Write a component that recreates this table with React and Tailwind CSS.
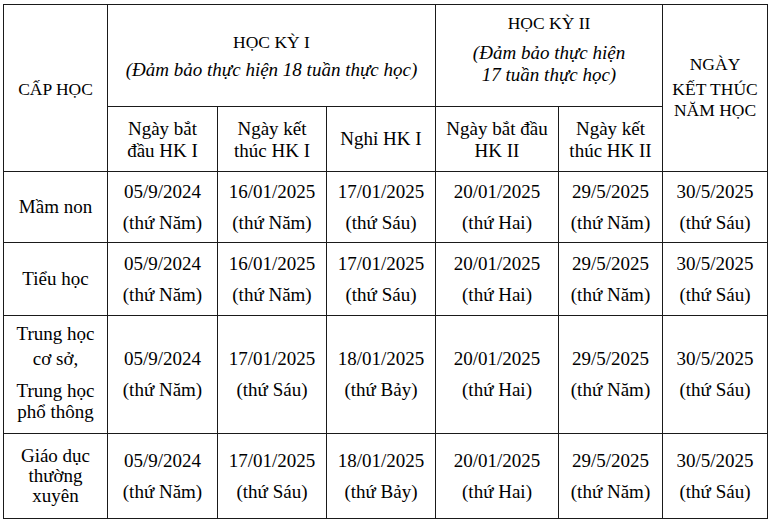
import React from "react";

const rows = [
  {
    name: ["Mầm non"],
    h: "h-[71px]",
    cells: [
      ["05/9/2024", "(thứ Năm)"],
      ["16/01/2025", "(thứ Năm)"],
      ["17/01/2025", "(thứ Sáu)"],
      ["20/01/2025", "(thứ Hai)"],
      ["29/5/2025", "(thứ Năm)"],
      ["30/5/2025", "(thứ Sáu)"],
    ],
  },
  {
    name: ["Tiểu học"],
    h: "h-[73px]",
    cells: [
      ["05/9/2024", "(thứ Năm)"],
      ["16/01/2025", "(thứ Năm)"],
      ["17/01/2025", "(thứ Sáu)"],
      ["20/01/2025", "(thứ Hai)"],
      ["29/5/2025", "(thứ Năm)"],
      ["30/5/2025", "(thứ Sáu)"],
    ],
  },
  {
    name: ["Trung học cơ sở,", "Trung học phổ thông"],
    h: "h-[118px]",
    cells: [
      ["05/9/2024", "(thứ Năm)"],
      ["17/01/2025", "(thứ Sáu)"],
      ["18/01/2025", "(thứ Bảy)"],
      ["20/01/2025", "(thứ Hai)"],
      ["29/5/2025", "(thứ Năm)"],
      ["30/5/2025", "(thứ Sáu)"],
    ],
  },
  {
    name: ["Giáo dục thường xuyên"],
    h: "h-[85px]",
    cells: [
      ["05/9/2024", "(thứ Năm)"],
      ["17/01/2025", "(thứ Sáu)"],
      ["18/01/2025", "(thứ Bảy)"],
      ["20/01/2025", "(thứ Hai)"],
      ["29/5/2025", "(thứ Năm)"],
      ["30/5/2025", "(thứ Sáu)"],
    ],
  },
];

const cell = "border border-[#1a1a1a] text-center align-middle p-0";

const App = () => {
  return (
    <div className="w-[770px] h-[524px] bg-white pl-[3px] pt-[4px] text-black [font-family:'Liberation_Serif',serif] text-[19px]">
      <table className="border-collapse table-fixed w-[764px]">
        <colgroup>
          <col className="w-[104px]" />
          <col className="w-[110px]" />
          <col className="w-[109px]" />
          <col className="w-[109px]" />
          <col className="w-[123px]" />
          <col className="w-[104px]" />
          <col className="w-[105px]" />
        </colgroup>
        <tbody>
          <tr className="h-[102px]">
            <td rowSpan={2} className={cell}>
              <div className="text-[17.5px] leading-[22px] pt-[1px]">CẤP HỌC</div>
            </td>
            <td colSpan={3} className={cell}>
              <div className="flex flex-col items-center gap-[6px] leading-[22px]">
                <div className="text-[17.5px]">HỌC KỲ I</div>
                <div className="italic">(Đảm bảo thực hiện 18 tuần thực học)</div>
              </div>
            </td>
            <td colSpan={2} className={`${cell} !align-top`}>
              <div className="flex flex-col items-center gap-[8px] leading-[22px] pt-[7px]">
                <div className="text-[17.5px]">HỌC KỲ II</div>
                <div className="italic">
                  <div>(Đảm bảo thực hiện</div>
                  <div>17 tuần thực học)</div>
                </div>
              </div>
            </td>
            <td rowSpan={2} className={cell}>
              <div className="flex flex-col items-center gap-[4px] text-[17.5px] leading-[21px] pb-[2px]">
                <div>NGÀY</div>
                <div>
                  <div>KẾT THÚC</div>
                  <div>NĂM HỌC</div>
                </div>
              </div>
            </td>
          </tr>
          <tr className="h-[65px]">
            <td className={cell}>
              <div className="leading-[22px] pt-[2px]">Ngày bắt<br />đầu HK I</div>
            </td>
            <td className={cell}>
              <div className="leading-[22px] pt-[2px]">Ngày kết<br />thúc HK I</div>
            </td>
            <td className={cell}>
              <div className="leading-[22px]">Nghỉ HK I</div>
            </td>
            <td className={cell}>
              <div className="leading-[22px] pt-[2px]">Ngày bắt đầu<br />HK II</div>
            </td>
            <td className={cell}>
              <div className="leading-[22px] pt-[2px]">Ngày kết<br />thúc HK II</div>
            </td>
          </tr>
          {rows.map((r, i) => (
            <tr key={i} className={r.h}>
              <td className={cell}>
                {r.name.length === 2 ? (
                  <div className="flex flex-col items-center gap-[9px] px-[4px] pb-[6px]">
                    <div className="leading-[25px]">{r.name[0]}</div>
                    <div className="leading-[21px]">{r.name[1]}</div>
                  </div>
                ) : (
                  <div className="leading-[20px] px-[4px]">{r.name[0]}</div>
                )}
              </td>
              {r.cells.map((c, j) => (
                <td key={j} className={cell}>
                  <div className="flex flex-col items-center gap-[9px] leading-[22px]">
                    <div>{c[0]}</div>
                    <div>{c[1]}</div>
                  </div>
                </td>
              ))}
            </tr>
          ))}
        </tbody>
      </table>
    </div>
  );
};

export default App;
